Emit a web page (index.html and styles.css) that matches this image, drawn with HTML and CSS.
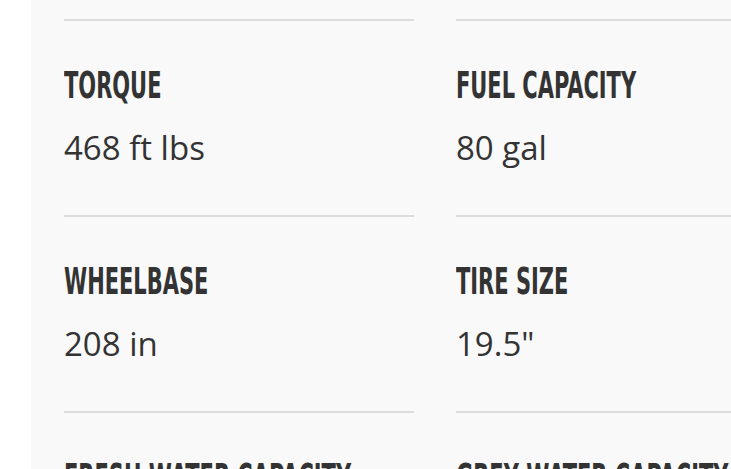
FILE: index.html
```html
<!DOCTYPE html>
<html lang="en">
<head>
<meta charset="utf-8">
<title>Specs</title>
<link rel="stylesheet" href="styles.css">
</head>
<body>
<div class="panel">
  <div class="specs">
    <div class="spec"><h3 class="label"><span>TORQUE</span></h3><p class="value">468 ft lbs</p></div>
    <div class="spec"><h3 class="label"><span>FUEL CAPACITY</span></h3><p class="value">80 gal</p></div>
    <div class="spec"><h3 class="label"><span>WHEELBASE</span></h3><p class="value">208 in</p></div>
    <div class="spec"><h3 class="label"><span>TIRE SIZE</span></h3><p class="value">19.5"</p></div>
    <div class="spec"><h3 class="label"><span>FRESH WATER CAPACITY</span></h3><p class="value">46 gal</p></div>
    <div class="spec"><h3 class="label"><span>GREY WATER CAPACITY</span></h3><p class="value">38 gal</p></div>
  </div>
</div>
</body>
</html>
```
FILE: styles.css
```css
html, body {
  margin: 0;
  padding: 0;
  background: #ffffff;
  overflow: hidden;
  height: 100%;
}
.panel {
  margin-left: 31px;
  background: #f9f9f9;
  padding: 19px 0 0 33px;
  min-height: 100%;
  box-sizing: border-box;
  width: 900px;
}
.specs {
  display: grid;
  grid-template-columns: 350px 350px;
  grid-auto-rows: 196px;
  column-gap: 42px;
}
.spec {
  border-top: 2px solid #dddddd;
  padding-top: 46px;
  box-sizing: border-box;
}
.label {
  margin: 0;
  font-family: "DejaVu Sans", sans-serif;
  font-stretch: condensed;
  font-weight: 700;
  font-size: 37px;
  line-height: 38px;
  color: #333333;
  white-space: nowrap;
}
.label span {
  display: inline-block;
  transform: scaleX(0.63);
  transform-origin: left center;
}
.value {
  margin: 27px 0 0;
  font-family: "Open Sans", sans-serif;
  font-weight: 400;
  font-size: 33px;
  line-height: 32px;
  color: #333333;
}
```
